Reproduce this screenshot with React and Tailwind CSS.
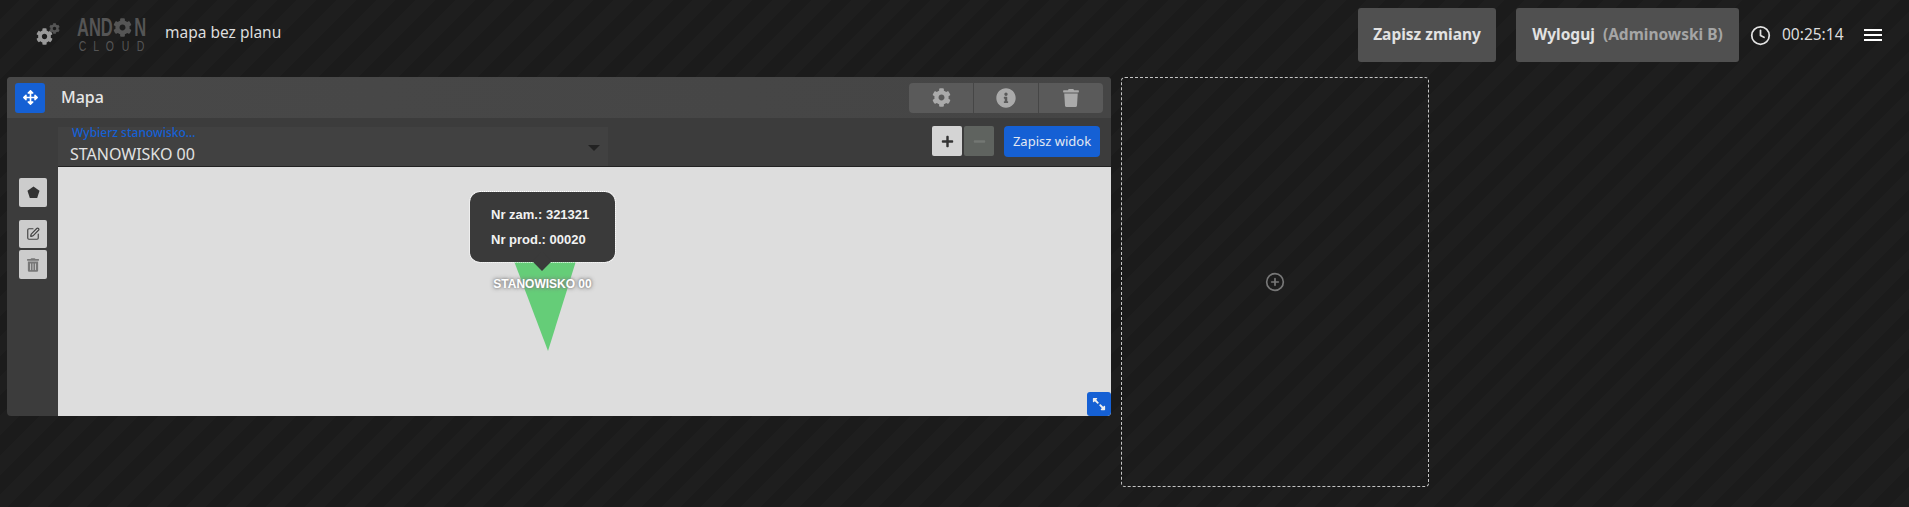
import { FaArrowsAlt, FaCog, FaExpandAlt, FaInfoCircle, FaPlus, FaMinus, FaTrash, FaTrashAlt } from 'react-icons/fa';
import { FiClock, FiPlusCircle } from 'react-icons/fi';
import { SquarePen } from 'lucide-react';

const Logo = () => (
  <div className="flex items-center -mt-[2px]">
    <div className="relative w-[24px] h-[24px] ml-[36px] mt-[2px]">
      <FaCog className="absolute left-0 top-[5px] w-[17px] h-[17px] text-[#9a9a9a]" />
      <FaCog className="absolute left-[13px] top-0 w-[11px] h-[11px] text-[#555555]" />
    </div>
    <div className="ml-[17px] w-[69px] text-[#555555] font-['Liberation_Sans',sans-serif] select-none">
      <div className="relative h-[20px] text-[25px] leading-[20px] font-bold">
        <span className="absolute left-0 top-0 origin-left scale-x-[0.66]">AND</span>
        <FaCog className="absolute left-[36px] top-[1px] w-[19px] h-[19px]" />
        <span className="absolute right-0 top-0 origin-right scale-x-[0.66]">N</span>
      </div>
      <div className="flex justify-between h-[12px] text-[15px] leading-[12px] mt-[3px]">
        <span className="scale-x-[0.7]">C</span>
        <span className="scale-x-[0.7]">L</span>
        <span className="scale-x-[0.7]">O</span>
        <span className="scale-x-[0.7]">U</span>
        <span className="scale-x-[0.7]">D</span>
      </div>
    </div>
    <div className="ml-[19px] mb-[3px] text-[15.5px] text-[#dddddd]">mapa bez planu</div>
  </div>
);

const TopBar = () => (
  <header className="flex items-center justify-between h-[64px] pt-[6px]">
    <Logo />
    <div className="flex items-center">
      <button className="h-[54px] w-[138px] rounded-[3px] bg-[#505050] text-[15.5px] font-bold text-[#e2e2e2]">Zapisz zmiany</button>
      <button className="ml-[20px] h-[54px] w-[223px] rounded-[3px] bg-[#505050] text-[15.5px] font-bold text-[#e2e2e2]">
        Wyloguj <span className="ml-[4px] text-[#a5a5a5]">(Adminowski B)</span>
      </button>
      <FiClock className="ml-[11px] w-[21px] h-[21px] text-[#e2e2e2]" />
      <span className="ml-[11px] w-[62px] text-[15.5px] text-[#dddddd]">00:25:14</span>
      <div className="ml-[20px] mr-[27px] w-[18px] flex flex-col gap-[3px]">
        <div className="h-[2px] bg-white" />
        <div className="h-[2px] bg-white" />
        <div className="h-[2px] bg-white" />
      </div>
    </div>
  </header>
);

const HeaderActions = () => (
  <div className="flex h-[30px] w-[194px] rounded-[4px] bg-[#5a5a5a] text-[#aaaaaa] divide-x divide-[#464646]">
    <div className="flex-1 flex items-center justify-center"><FaCog className="w-[19px] h-[19px]" /></div>
    <div className="flex-1 flex items-center justify-center"><FaInfoCircle className="w-[20px] h-[20px]" /></div>
    <div className="flex-1 flex items-center justify-center"><FaTrash className="w-[16px] h-[18px]" /></div>
  </div>
);

const Pin = () => (
  <div className="absolute left-[412px] top-[25px] w-[145px]">
    {/* green marker under the tooltip */}
    <svg className="absolute left-[44px] top-[69px]" width="64" height="90" viewBox="0 0 64 90">
      <polygon points="0,0 62,0 34,90" fill="#65cd78" />
    </svg>
    <div className="absolute left-0 top-[83px] w-[145px] text-center text-[12px] font-bold text-white font-['Liberation_Sans',sans-serif] [text-shadow:0_0_3px_#777777,0_0_5px_#888888]">
      STANOWISKO 00
    </div>
    <div className="relative h-[70px] rounded-[10px] bg-[#3a3a3a] outline-1 outline-dotted outline-white pl-[21px] pt-[10px] text-[13px] leading-[25px] font-bold text-[#f2f2f2] font-['Liberation_Sans',sans-serif]">
      <div>Nr zam.: 321321</div>
      <div>Nr prod.: 00020</div>
      <div className="absolute left-[65px] top-[62px] w-[14px] h-[14px] rotate-45 bg-[#3a3a3a]" />
    </div>
  </div>
);

const MapPanel = () => (
  <section className="w-[1104px] h-[339px] shrink-0 flex flex-col rounded-[4px] bg-[#3c3c3c] overflow-hidden relative">
    <div className="flex items-center h-[41px] pl-[8px] pr-[8px] bg-gradient-to-r from-[#484848] to-[#454545]">
      <div className="w-[30px] h-[30px] rounded-[3px] bg-[#1560d4] flex items-center justify-center">
        <FaArrowsAlt className="w-[15px] h-[15px] text-white" />
      </div>
      <span className="ml-[16px] mb-[2px] text-[16px] font-medium text-[#e6e6e6]">Mapa</span>
      <div className="ml-auto"><HeaderActions /></div>
    </div>
    <div className="flex flex-1 min-h-0">
      <div className="w-[51px] shrink-0 flex flex-col items-end pr-[11px] pt-[60px]">
        <div className="w-[28px] h-[29px] rounded-[2px] bg-[#cccccc] flex items-center justify-center">
          <svg width="13" height="13" viewBox="0 0 13 13"><polygon points="6.5,0.5 12.5,4.8 10.2,12 2.8,12 0.5,4.8" fill="#333333" /></svg>
        </div>
        <div className="mt-[13px] w-[28px] h-[28px] rounded-[2px] bg-[#cccccc] flex items-center justify-center">
          <SquarePen className="w-[14px] h-[14px] text-[#444444]" />
        </div>
        <div className="mt-[2px] w-[28px] h-[29px] rounded-[2px] bg-[#cccccc] flex items-center justify-center">
          <FaTrashAlt className="w-[12px] h-[14px] text-[#777777]" />
        </div>
      </div>
      <div className="flex-1 min-w-0 flex flex-col">
        <div className="relative h-[48px] shrink-0 flex items-start">
          <div className="mt-[9px] w-[550px] h-[39px] bg-[#414141] relative">
            <div className="absolute left-[14px] -top-[1px] text-[12px] leading-[14px] font-medium text-[#1560d4]">Wybierz stanowisko...</div>
            <div className="absolute left-[12px] top-[16px] text-[16px] leading-[22px] text-[#e2e2e2]">STANOWISKO 00</div>
            <div className="absolute left-[530px] top-[18px] border-x-[6px] border-t-[6px] border-x-transparent border-t-[#222222]" />
          </div>
          <div className="ml-auto mr-[11px] mt-[8px] flex">
            <div className="w-[30px] h-[30px] rounded-[2px] bg-[#d4d4d4] flex items-center justify-center">
              <FaPlus className="w-[13px] h-[13px] text-[#333333]" />
            </div>
            <div className="ml-[2px] w-[30px] h-[30px] rounded-[2px] bg-[#5f635f] flex items-center justify-center">
              <FaMinus className="w-[13px] h-[13px] text-[#737773]" />
            </div>
            <button className="ml-[10px] w-[96px] h-[31px] rounded-[4px] bg-[#1560d4] text-[13px] text-[#e2e8f2]">Zapisz widok</button>
          </div>
        </div>
        <div className="relative flex-1 bg-[#dddddd] border-t border-[#222222]">
          <Pin />
        </div>
      </div>
    </div>
    <div className="absolute right-0 bottom-0 w-[24px] h-[24px] rounded-[3px] bg-[#1560d4] flex items-center justify-center">
      <FaExpandAlt className="w-[14px] h-[14px] text-[#eeeeee] -scale-x-100" />
    </div>
  </section>
);

const EmptySlot = () => (
  <section className="ml-[10px] w-[308px] h-[410px] shrink-0 rounded-[4px] border border-dashed border-[#c4c4c4] flex items-center justify-center pb-[1px]">
    <FiPlusCircle className="w-[20px] h-[20px] text-[#777777]" />
  </section>
);

export default function App() {
  return (
    <div className="w-full h-[507px] overflow-hidden font-['Noto_Sans',sans-serif] bg-[repeating-linear-gradient(135deg,#1b1b1b_0,#1b1b1b_14px,#1e1e1e_14px,#1e1e1e_28px)]">
      <TopBar />
      <main className="flex items-start pl-[7px] pt-[13px]">
        <MapPanel />
        <EmptySlot />
      </main>
    </div>
  );
}
